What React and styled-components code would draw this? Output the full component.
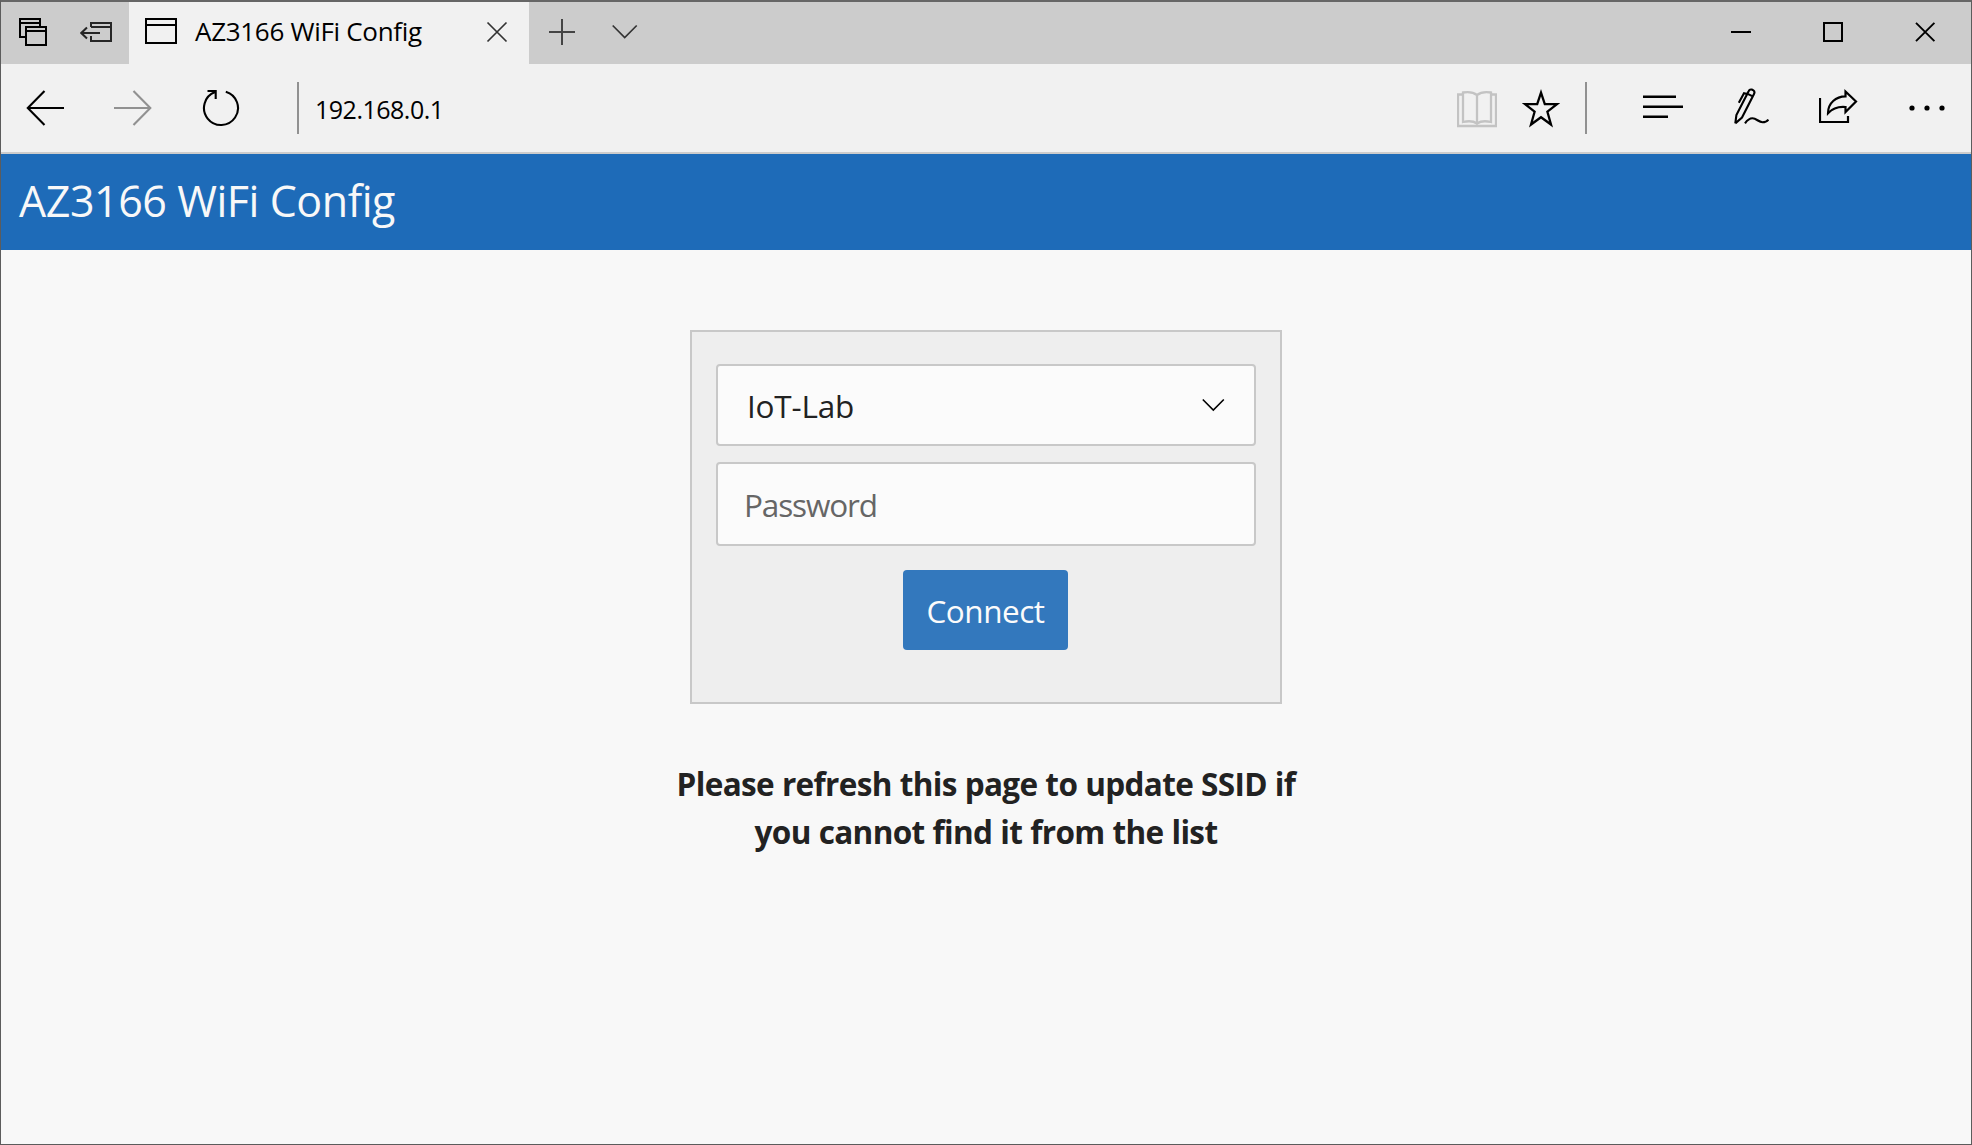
import React from "react";
import styled, { createGlobalStyle } from "styled-components";

const Global = createGlobalStyle`
  * { box-sizing: border-box; }
  body { margin: 0; font-family: "Open Sans", "Noto Sans", sans-serif; }
  button, input { font: inherit; margin: 0; }
`;

const Frame = styled.div`
  display: flex;
  flex-direction: column;
  height: 1145px;
  border: 1px solid #5c5c5c;
  border-top: 2px solid #666;
  background: #f8f8f8;
`;

const TitleBar = styled.div`
  display: flex;
  height: 62px;
  background: #ccc;
`;

const Tools = styled.div`
  display: flex;
  align-items: center;
  gap: ${(p) => p.$gap}px;
  padding: 0 ${(p) => p.$right || 0}px 0 ${(p) => p.$left || 0}px;
`;

const Tab = styled.div`
  display: flex;
  align-items: center;
  width: 400px;
  padding: 0 21px 0 15px;
  background: #f1f1f1;
`;

const TabTitle = styled.span`
  flex: 1;
  padding: 0 0 4px 17px;
  font-size: 26px;
  line-height: 36px;
  letter-spacing: -0.3px;
  white-space: nowrap;
  color: #000;
`;

const Spacer = styled.div`
  flex: 1;
`;

const Toolbar = styled.div`
  display: flex;
  align-items: center;
  height: 90px;
  background: #f1f1f1;
  border-bottom: 2px solid #ccc;
`;

const Divider = styled.div`
  width: 2px;
  height: 52px;
  background: #919191;
`;

const Address = styled.span`
  padding: 2px 0 0 16px;
  font-size: 25px;
  line-height: 36px;
  letter-spacing: -0.5px;
  color: #000;
`;

const IconButton = styled.button`
  display: flex;
  padding: 0;
  border: 0;
  background: none;
  color: ${(p) => p.$color || "#000"};
`;

const PageHeader = styled.header`
  display: flex;
  align-items: center;
  height: 96px;
  padding: 0 18px 2px;
  background: #1e6bb8;
`;

const PageTitle = styled.h1`
  margin: 0;
  font-size: 43px;
  font-weight: 400;
  line-height: 60px;
  letter-spacing: -0.45px;
  color: #f8f8f8;
`;

const Content = styled.main`
  display: flex;
  flex-direction: column;
  align-items: center;
  padding-top: 80px;
`;

const Card = styled.form`
  display: flex;
  flex-direction: column;
  align-items: center;
  width: 592px;
  height: 374px;
  padding: 32px 24px 0;
  border: 2px solid #c8c8c8;
  background: #eee;
`;

const Select = styled.button`
  display: flex;
  align-items: center;
  justify-content: space-between;
  width: 540px;
  height: 82px;
  padding: 0 29px 0 29px;
  border: 2px solid #c8c8c8;
  border-radius: 4px;
  background: #fbfbfb;
`;

const SelectValue = styled.span`
  padding-top: 2px;
  font-size: 31.5px;
  line-height: 44px;
  letter-spacing: -0.2px;
  color: #222;
`;

const ChevronSlot = styled.span`
  display: flex;
`;

const Input = styled.input`
  width: 540px;
  height: 84px;
  margin-top: 16px;
  padding: 0 25px 0 26px;
  border: 2px solid #c8c8c8;
  border-radius: 4px;
  background: #fbfbfb;
  font-size: 31.5px;
  letter-spacing: -1.15px;
  outline: none;
  &::placeholder { color: #666; opacity: 1; }
`;

const ConnectButton = styled.button`
  width: 165px;
  height: 80px;
  margin: 24px 1px 0 0;
  padding: 2px 0 0;
  border: 0;
  border-radius: 4px;
  background: #3378bd;
  color: #fbfbfb;
  font-size: 31.5px;
  line-height: 44px;
  letter-spacing: -0.5px;
`;

const Notice = styled.p`
  margin: 56px 0 0;
  text-align: center;
  font-size: 31.5px;
  font-weight: 700;
  line-height: 48px;
  letter-spacing: -0.65px;
  word-spacing: 0.4px;
  color: #222;
`;

const Svg = styled.svg`
  display: block;
  fill: none;
  stroke: currentColor;
`;

const Icon = ({ x, y, w, h, sw = 2, children }) => (
  <Svg width={w} height={h} viewBox={`${x} ${y} ${w} ${h}`} strokeWidth={sw}>
    {children}
  </Svg>
);

export default function App() {
  return (
    <>
      <Global />
      <Frame>
        <TitleBar>
          <Tools $left={18} $gap={33} $right={17}>
            <IconButton aria-label="Tabs you've set aside">
              <Icon x={19} y={17} w={28} h={32}>
                <path d="M25 37H20V19H40V26M20 23H40M26 27H46V45H26ZM26 31H46" />
              </Icon>
            </IconButton>
            <IconButton aria-label="Set these tabs aside" $color="#262626">
              <Icon x={80} y={17} w={32} h={32}>
                <path d="M91 27V23H111V41H91V36M91 27H111M81 33H100M87 27.5L81.3 33L87 38.5" />
              </Icon>
            </IconButton>
          </Tools>
          <Tab>
            <IconButton as="span">
              <Icon x={144} y={17} w={34} h={32}>
                <path d="M146 19H176V43H146ZM146 25H176" />
              </Icon>
            </IconButton>
            <TabTitle>AZ3166 WiFi Config</TabTitle>
            <IconButton aria-label="Close tab" $color="#333">
              <Icon x={486} y={17} w={22} h={32} sw={1.7}>
                <path d="M487.5 22.5L506.5 41.5M506.5 22.5L487.5 41.5" />
              </Icon>
            </IconButton>
          </Tab>
          <Tools $left={20} $gap={37}>
            <IconButton aria-label="New tab" $color="#444">
              <Icon x={549} y={17} w={26} h={32}>
                <path d="M549 32H575M562 19V45" />
              </Icon>
            </IconButton>
            <IconButton aria-label="Tab previews" $color="#333">
              <Icon x={612} y={17} w={26} h={32} sw={1.7}>
                <path d="M612.7 25.5L624.7 37.5L636.7 25.5" />
              </Icon>
            </IconButton>
          </Tools>
          <Spacer />
          <Tools $gap={72} $right={35}>
            <IconButton aria-label="Minimize">
              <Icon x={1731} y={17} w={20} h={32}>
                <path d="M1731 32H1751" />
              </Icon>
            </IconButton>
            <IconButton aria-label="Maximize">
              <Icon x={1823} y={17} w={20} h={32}>
                <path d="M1824 23H1842V41H1824Z" />
              </Icon>
            </IconButton>
            <IconButton aria-label="Close">
              <Icon x={1915} y={17} w={21} h={32} sw={1.9}>
                <path d="M1916 22.8L1934.4 41.2M1934.4 22.8L1916 41.2" />
              </Icon>
            </IconButton>
          </Tools>
        </TitleBar>

        <Toolbar>
          <Tools $left={25} $gap={49} $right={57}>
            <IconButton aria-label="Back">
              <Icon x={26} y={88} w={39} h={40} sw={2.1}>
                <path d="M28 108H64M44.5 91L27.8 108L44.5 125" />
              </Icon>
            </IconButton>
            <IconButton aria-label="Forward" $color="#919191">
              <Icon x={114} y={88} w={38} h={40} sw={2.1}>
                <path d="M114 108H150M133.5 91L150.3 108L133.5 125" />
              </Icon>
            </IconButton>
            <IconButton aria-label="Refresh">
              <Icon x={201} y={88} w={39} h={40} sw={2.1}>
                <path d="M225.8 91.7A17 17 0 1 1 215 92.1M207.5 91H215.7V99" />
              </Icon>
            </IconButton>
          </Tools>
          <Divider />
          <Address>192.168.0.1</Address>
          <Spacer />
          <Tools $gap={24} $right={24}>
            <IconButton aria-label="Reading view" $color="#c3c3c3">
              <Icon x={1457} y={88} w={40} h={40} sw={2.3}>
                <path d="M1463 94.5H1458V126H1496V94.5H1491M1463 122V92.5Q1472 91 1477 95Q1482 91 1491 92.5V122Q1482 120 1477 123.5Q1472 120 1463 122ZM1477 95V123.5" />
              </Icon>
            </IconButton>
            <IconButton aria-label="Add to favorites">
              <Icon x={1521} y={88} w={40} h={40} sw={2.3}>
                <path d="M1541 92.7L1544.8 104.1H1557L1547.4 111.7L1551 124.5L1541 117.2L1531 124.5L1534.6 111.7L1525 104.1H1537.2Z" />
              </Icon>
            </IconButton>
          </Tools>
          <Divider />
          <Tools $left={56} $gap={50} $right={26}>
            <IconButton aria-label="Hub">
              <Icon x={1643} y={88} w={40} h={40} sw={2.5}>
                <path d="M1643 96.7H1676M1643 106.7H1683M1643 116.7H1668" />
              </Icon>
            </IconButton>
            <IconButton aria-label="Make a web note">
              <Icon x={1733} y={88} w={36} h={40} sw={2.1}>
                <path d="M1735.3 123.4L1736.4 115L1748.6 91.2Q1749.6 89 1751.8 89.6L1753.4 90.4Q1755.2 91.6 1754 94L1742 117.6L1735.3 123.4M1747.3 93.6L1753.2 96.6M1747.3 94L1744 93.2L1738.8 102.8M1745 123.4Q1748.5 118.3 1752.5 118.3C1756.5 118.3 1758.5 122.2 1762.5 122.2Q1766.5 122.2 1768.4 119.5" />
              </Icon>
            </IconButton>
            <IconButton aria-label="Share">
              <Icon x={1819} y={88} w={40} h={40} sw={2.2}>
                <path d="M1820 98V122H1848V116M1845.5 91.5L1856 101.5L1845.5 112V107C1838 106.3 1832 109 1828 113.2C1828 103 1836 96.6 1845.5 96.4Z" />
              </Icon>
            </IconButton>
            <IconButton aria-label="Settings and more">
              <Icon x={1909} y={88} w={36} h={40} sw={0}>
                <g fill="currentColor">
                  <circle cx="1912" cy="108" r="2.6" />
                  <circle cx="1927" cy="108" r="2.6" />
                  <circle cx="1942" cy="108" r="2.6" />
                </g>
              </Icon>
            </IconButton>
          </Tools>
        </Toolbar>

        <PageHeader>
          <PageTitle>AZ3166 WiFi Config</PageTitle>
        </PageHeader>

        <Content>
          <Card onSubmit={(e) => e.preventDefault()}>
            <Select type="button">
              <SelectValue>IoT-Lab</SelectValue>
              <ChevronSlot>
                <Icon x={1202} y={398} w={23} h={14} sw={1.6}>
                  <path d="M1202.8 399.5L1213.3 410L1223.8 399.5" />
                </Icon>
              </ChevronSlot>
            </Select>
            <Input type="password" placeholder="Password" />
            <ConnectButton>Connect</ConnectButton>
          </Card>
          <Notice>
            Please refresh this page to update SSID if
            <br />
            you cannot find it from the list
          </Notice>
        </Content>
      </Frame>
    </>
  );
}
